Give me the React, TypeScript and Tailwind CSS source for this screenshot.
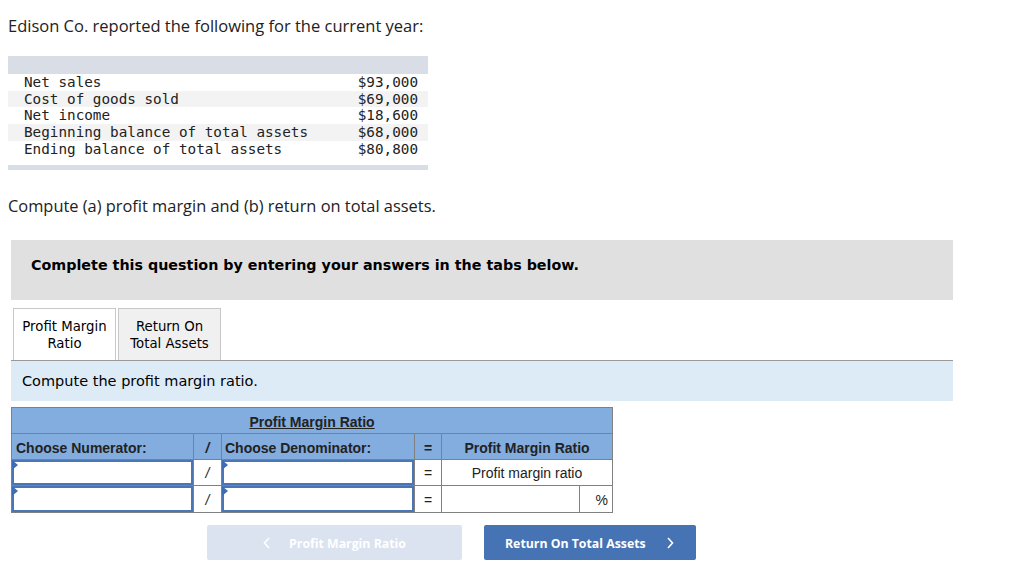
import React from "react";

const rows: [string, string][] = [
  ["Net sales", "$93,000"],
  ["Cost of goods sold", "$69,000"],
  ["Net income", "$18,600"],
  ["Beginning balance of total assets", "$68,000"],
  ["Ending balance of total assets", "$80,800"],
];

function InputCell({ tall = false }: { tall?: boolean }) {
  return (
    <td className="relative p-0 border border-[#808080] bg-white">
      <div className={`relative ${tall ? "h-[26px]" : "h-[25px]"} border-2 border-[#4a76b8] bg-white`}>
        <span className="absolute left-[-2px] top-[-2px] w-0 h-0 border-t-[5px] border-b-[5px] border-l-[6px] border-t-transparent border-b-transparent border-l-[#3d6eb5]" />
      </div>
    </td>
  );
}

export default function App() {
  return (
    <div className="w-[1024px] min-h-[587px] bg-white text-[#222] pt-[14px] font-['Open_Sans']">
      <p className="ml-[8px] text-[16.5px] leading-[24px] font-['Open_Sans']">
        Edison Co. reported the following for the current year:
      </p>

      <div className="ml-[8px] mt-[18px] w-[420px] font-['DejaVu_Sans_Mono'] text-[14.3px] text-[#222]">
        <div className="h-[18px] bg-[#d9dde6]" />
        {rows.map(([l, v], i) => (
          <div
            key={l}
            className={`flex justify-between h-[16.7px] leading-[16.7px] pl-[16px] pr-[10px] ${i % 2 === 1 ? "bg-[#f3f3f3]" : "bg-white"}`}
          >
            <span className="whitespace-pre">{l}</span>
            <span>{v}</span>
          </div>
        ))}
        <div className="h-[8px]" />
        <div className="h-[5px] bg-[#d9dde6]" />
      </div>

      <p className="ml-[8px] mt-[24px] text-[16.4px] leading-[24px] font-['Open_Sans']">
        Compute (a) profit margin and (b) return on total assets.
      </p>

      <div className="ml-[11px] w-[942px] mt-[22px]">
        <div className="h-[60px] bg-[#e0e0e0] pl-[20px] pt-[17px] font-['DejaVu_Sans'] font-bold text-[14.3px] leading-[16px] text-black">
          Complete this question by entering your answers in the tabs below.
        </div>

        <div className="mt-[8px] flex items-end border-b border-[#999] font-['DejaVu_Sans'] text-[13.3px] leading-[17px] text-black">
          <div className="ml-[2px] w-[103px] h-[52px] bg-white border border-b-0 border-[#c8c8c8] flex flex-col items-center justify-center text-center">
            <span>Profit Margin</span>
            <span>Ratio</span>
          </div>
          <div className="ml-[2px] w-[103px] h-[52px] bg-[#f0f0f0] border border-b-0 border-[#c8c8c8] flex flex-col items-center justify-center text-center">
            <span>Return On</span>
            <span>Total Assets</span>
          </div>
        </div>

        <div className="h-[40px] bg-[#ddebf7] pl-[11px] flex items-center font-['DejaVu_Sans'] text-[14.5px] text-black">
          Compute the profit margin ratio.
        </div>

        <table className="mt-[6px] w-[601px] border-collapse table-fixed font-['Liberation_Sans'] text-[14px] leading-[18px] text-[#222] border border-[#808080]">
          <colgroup>
            <col className="w-[182px]" />
            <col className="w-[28px]" />
            <col className="w-[193px]" />
            <col className="w-[27px]" />
            <col className="w-[138px]" />
            <col className="w-[33px]" />
          </colgroup>
          <tbody>
            <tr className="h-[26px] bg-[#83acdf]">
              <td colSpan={6} className="text-center font-bold underline border border-[#808080] pt-[2px]">
                Profit Margin Ratio
              </td>
            </tr>
            <tr className="h-[26px] bg-[#83acdf] font-bold">
              <td className="border border-[#808080] px-[4px] pt-[3px]">Choose Numerator:</td>
              <td className="border border-[#808080] text-center italic pt-[3px]">/</td>
              <td className="border border-[#808080] px-[3px] pt-[3px]">Choose Denominator:</td>
              <td className="border border-[#808080] text-center pt-[3px]">=</td>
              <td colSpan={2} className="border border-[#808080] text-center pt-[3px]">Profit Margin Ratio</td>
            </tr>
            <tr className="h-[26px]">
              <InputCell />
              <td className="border border-[#808080] bg-white text-center italic">/</td>
              <InputCell />
              <td className="border border-[#808080] bg-white text-center">=</td>
              <td colSpan={2} className="border border-[#808080] bg-white text-center">Profit margin ratio</td>
            </tr>
            <tr className="h-[27px]">
              <InputCell tall />
              <td className="border border-[#808080] bg-white text-center italic pt-[2px]">/</td>
              <InputCell tall />
              <td className="border border-[#808080] bg-white text-center pt-[2px]">=</td>
              <td className="border border-[#808080] bg-white" />
              <td className="border border-[#808080] bg-white text-right pr-[4px] pt-[2px]">%</td>
            </tr>
          </tbody>
        </table>
      </div>

      <div className="mt-[12px] ml-[207px] flex gap-[22px] font-['Open_Sans'] font-bold text-[12.3px] text-white">
        <div className="w-[255px] h-[35px] rounded-[2px] bg-[#dae3ef] flex items-center justify-center gap-[18px] pt-[3px]">
          <svg width="8" height="12" viewBox="0 0 8 12" fill="none" stroke="white" strokeWidth="1.6" className="-mt-[3px]">
            <path d="M6 1 L1.5 6 L6 11" />
          </svg>
          <span>Profit Margin Ratio</span>
        </div>
        <div className="w-[212px] h-[35px] rounded-[2px] bg-[#4673b3] flex items-center pl-[21px] gap-[20px] pt-[3px]">
          <span>Return On Total Assets</span>
          <svg width="8" height="12" viewBox="0 0 8 12" fill="none" stroke="white" strokeWidth="1.6" className="-mt-[3px]">
            <path d="M2 1 L6.5 6 L2 11" />
          </svg>
        </div>
      </div>
    </div>
  );
}
